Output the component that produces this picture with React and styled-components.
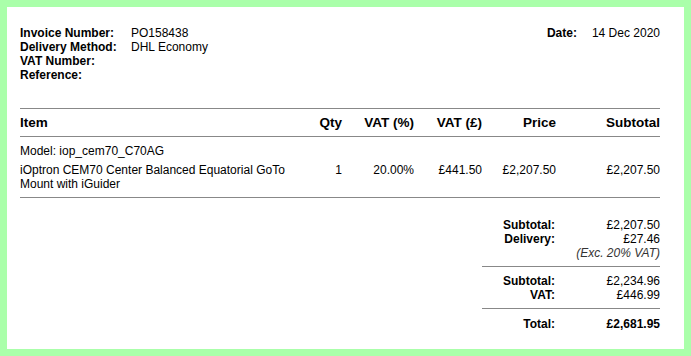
import styled, { createGlobalStyle } from 'styled-components'

const Global = createGlobalStyle`
    html, body {
        margin: 0;
        padding: 0;
        background: #aaffaa;
    }
    body {
        font-family: "Liberation Sans", Arial, sans-serif;
        color: #000;
    }
`

const Frame = styled.div`
    width: 691px;
    height: 356px;
    box-sizing: border-box;
    padding: 7px;
    background: #aaffaa;
`

const Sheet = styled.div`
    height: 100%;
    box-sizing: border-box;
    background: #fff;
    padding: 19px 24px 0 13px;
    font-size: 12px;
    line-height: 14px;
`

const Info = styled.div`
    display: flex;
    justify-content: space-between;
    align-items: flex-start;
`

const Fields = styled.div`
    display: grid;
    grid-template-columns: ${p => p.$label}px auto;
`

const Label = styled.div`
    font-weight: bold;
`

const Value = styled.div``

const Table = styled.div`
    margin-top: 26px;
    border-top: 1px solid #888;
    border-bottom: 1px solid #888;
`

const Row = styled.div`
    display: grid;
    grid-template-columns: 282px 40px 72px 68px 74px 104px;
    align-items: start;
`

const Head = styled(Row)`
    height: 28px;
    align-items: center;
    border-bottom: 1px solid #888;
    font-size: 13.5px;
    font-weight: bold;
    padding-top: 1px;
    box-sizing: border-box;
`

const Body = styled.div`
    padding: 7px 0 6px;
`

const Model = styled.div`
    margin-bottom: 5px;
`

const Cell = styled.div`
    text-align: ${p => (p.$left ? 'left' : 'right')};
`

const Totals = styled.div`
    display: flex;
    flex-direction: column;
    align-items: flex-end;
    margin-top: 20px;
`

const Group = styled.div`
    width: 178px;
    display: grid;
    grid-template-columns: 73px 105px;
    padding: ${p => p.$pad || '0'};
    border-bottom: ${p => (p.$line ? '1px solid #888' : 'none')};
`

const TLabel = styled.div`
    font-weight: bold;
    text-align: right;
`

const TValue = styled.div`
    text-align: right;
    font-weight: ${p => (p.$bold ? 'bold' : 'normal')};
    font-style: ${p => (p.$note ? 'italic' : 'normal')};
    color: ${p => (p.$note ? '#333' : '#000')};
`

export default function App() {
    return (
        <Frame>
            <Global />
            <Sheet>
                <Info>
                    <Fields $label={111}>
                        <Label>Invoice Number:</Label>
                        <Value>PO158438</Value>
                        <Label>Delivery Method:</Label>
                        <Value>DHL Economy</Value>
                        <Label>VAT Number:</Label>
                        <Value></Value>
                        <Label>Reference:</Label>
                        <Value></Value>
                    </Fields>
                    <Fields $label={45}>
                        <Label>Date:</Label>
                        <Value>14 Dec 2020</Value>
                    </Fields>
                </Info>

                <Table>
                    <Head>
                        <Cell $left>Item</Cell>
                        <Cell>Qty</Cell>
                        <Cell>VAT (%)</Cell>
                        <Cell>VAT (£)</Cell>
                        <Cell>Price</Cell>
                        <Cell>Subtotal</Cell>
                    </Head>
                    <Body>
                        <Model>Model: iop_cem70_C70AG</Model>
                        <Row>
                            <Cell $left>iOptron CEM70 Center Balanced Equatorial GoTo Mount with iGuider</Cell>
                            <Cell>1</Cell>
                            <Cell>20.00%</Cell>
                            <Cell>£441.50</Cell>
                            <Cell>£2,207.50</Cell>
                            <Cell>£2,207.50</Cell>
                        </Row>
                    </Body>
                </Table>

                <Totals>
                    <Group $line $pad="0 0 6px">
                        <TLabel>Subtotal:</TLabel>
                        <TValue>£2,207.50</TValue>
                        <TLabel>Delivery:</TLabel>
                        <TValue>£27.46</TValue>
                        <TLabel></TLabel>
                        <TValue $note>(Exc. 20% VAT)</TValue>
                    </Group>
                    <Group $line $pad="7px 0 6px">
                        <TLabel>Subtotal:</TLabel>
                        <TValue>£2,234.96</TValue>
                        <TLabel>VAT:</TLabel>
                        <TValue>£446.99</TValue>
                    </Group>
                    <Group $pad="8px 0 0">
                        <TLabel>Total:</TLabel>
                        <TValue $bold>£2,681.95</TValue>
                    </Group>
                </Totals>
            </Sheet>
        </Frame>
    )
}
